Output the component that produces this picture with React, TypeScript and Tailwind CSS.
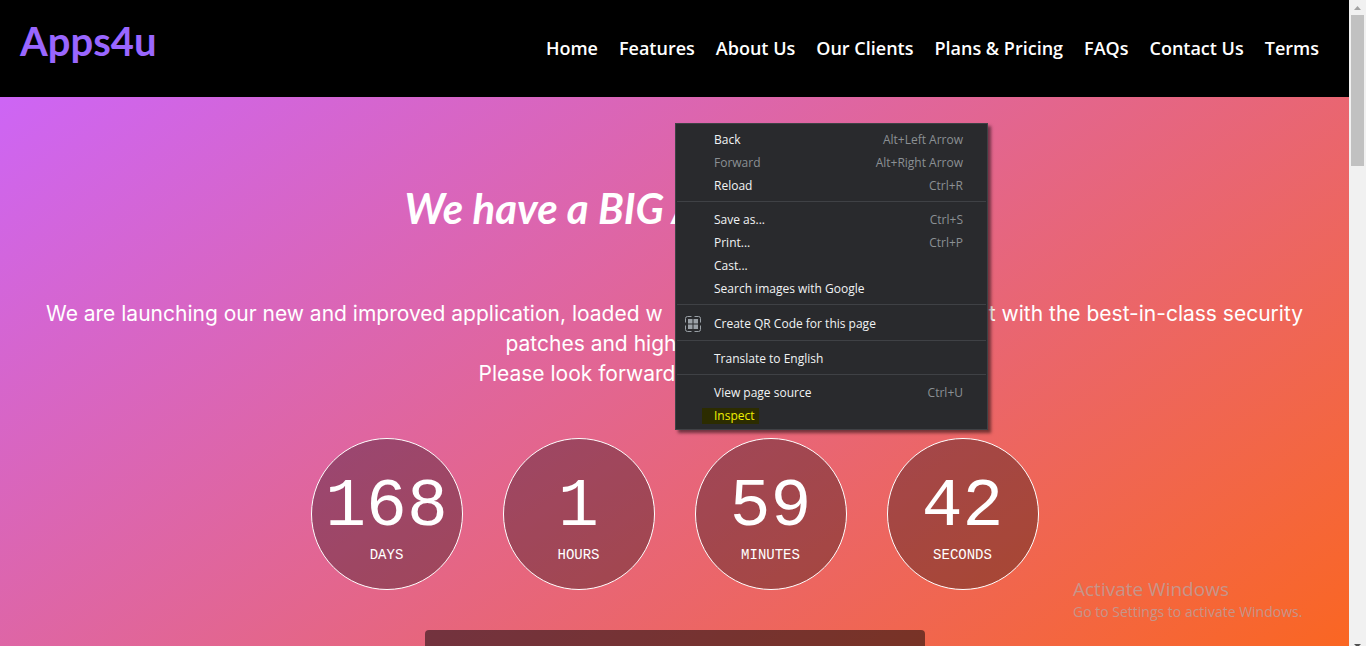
import React from "react";

const links = ["Home", "Features", "About Us", "Our Clients", "Plans & Pricing", "FAQs", "Contact Us", "Terms"];

const counters = [
  { value: "168", label: "DAYS" },
  { value: "1", label: "HOURS" },
  { value: "59", label: "MINUTES" },
  { value: "42", label: "SECONDS" },
];

type Item = { label: string; keys?: string; disabled?: boolean; icon?: boolean; marked?: boolean };

const groups: Item[][] = [
  [
    { label: "Back", keys: "Alt+Left Arrow" },
    { label: "Forward", keys: "Alt+Right Arrow", disabled: true },
    { label: "Reload", keys: "Ctrl+R" },
  ],
  [
    { label: "Save as...", keys: "Ctrl+S" },
    { label: "Print...", keys: "Ctrl+P" },
    { label: "Cast..." },
    { label: "Search images with Google" },
  ],
  [{ label: "Create QR Code for this page", icon: true }],
  [{ label: "Translate to English" }],
  [{ label: "View page source", keys: "Ctrl+U" }, { label: "Inspect", marked: true }],
];

function QrIcon() {
  return (
    <svg width="16" height="16" viewBox="0 0 16 16" fill="none" aria-hidden="true">
      <path
        d="M6.500 .5H2.500a2 2 0 0 0-2 2V6.500M9.500 .5h4a2 2 0 0 1 2 2V6.500M.5 9.500v4a2 2 0 0 0 2 2H6.500M15.500 9.500v4a2 2 0 0 1-2 2H9.500"
        stroke="#9aa0a6"
      />
      <path d="M3 3h4.500v4.500H3zM8.500 3H13v4.500H8.500zM3 8.500h4.500V13H3zM8.500 8.500H13V13H8.500z" fill="#9aa0a6" />
    </svg>
  );
}

function MenuItem({ item }: { item: Item }) {
  return (
    <button
      type="button"
      role="menuitem"
      disabled={item.disabled}
      className={`flex w-full items-center pr-6 text-left ${item.icon ? "h-[25px]" : "h-[23px]"} ${
        item.disabled ? "text-[#8b9094]" : item.marked ? "text-[#f0f000]" : "text-[#f1f3f4]"
      }`}
    >
      <span className="flex w-[34px] shrink-0 justify-center">{item.icon && <QrIcon />}</span>
      {item.marked ? (
        <span className="-ml-2 bg-[#2c2c00] pl-3 pr-1">{item.label}</span>
      ) : (
        <span className="pl-1">{item.label}</span>
      )}
      {item.keys && <span className="ml-auto text-[#8b9094]">{item.keys}</span>}
    </button>
  );
}

function ContextMenu() {
  return (
    <div
      role="menu"
      className="absolute left-[675px] top-[123px] w-[313px] border border-[#3f4145] bg-[#292a2d] pb-[2px] pt-1 font-['Open_Sans',sans-serif] text-[12px] leading-4 shadow-[3px_3px_3px_rgba(0,0,0,0.5)]"
    >
      {groups.map((group, i) => (
        <div key={i}>
          {i > 0 && (
            <div className="h-[11px] px-px pt-1">
              <div className="h-px bg-[#3f4145]" />
            </div>
          )}
          {group.map((item) => (
            <MenuItem key={item.label} item={item} />
          ))}
        </div>
      ))}
    </div>
  );
}

function Scrollbar() {
  return (
    <div className="flex w-[17px] shrink-0 flex-col items-center overflow-hidden bg-[#f1f1f1]" aria-hidden="true">
      <div className="flex h-[15px] shrink-0 items-center justify-center">
        <svg width="7" height="4" viewBox="0 0 7 4">
          <path d="M3.500 0L7 4H0z" fill="#a3a3a3" />
        </svg>
      </div>
      <div className="h-[151px] w-[13px] shrink-0 bg-[#c1c1c1]" />
      <svg className="mt-auto shrink-0" width="7" height="2" viewBox="0 0 7 2">
        <path d="M0 0h7L5 2H2z" fill="#505050" />
      </svg>
    </div>
  );
}

export default function App() {
  return (
    <div className="relative flex h-screen overflow-hidden">
      <div className="flex min-w-0 flex-1 flex-col">
        <header className="flex h-[97px] shrink-0 items-center justify-between bg-black pl-5 pr-[30px]">
          <a href="#" className="pb-4 font-['Lato',sans-serif] text-[40px] font-bold leading-[48px] text-[#9966ff]">
            Apps4u
          </a>
          <nav className="flex gap-[21px] whitespace-nowrap pb-0.5 font-['Open_Sans',sans-serif] text-[18px] font-semibold leading-6 text-white">
            {links.map((l) => (
              <a key={l} href="#">
                {l}
              </a>
            ))}
          </nav>
        </header>
        <main className="flex min-h-0 flex-1 flex-col items-center overflow-hidden bg-[linear-gradient(146deg,#cd65f5,#fa6622)] text-white">
          <h1 className="mt-[86px] w-[540px] whitespace-nowrap font-['Lato',sans-serif] text-[42px] font-bold italic leading-[50px]">
            We have a BIG A
          </h1>
          <div className="mt-[66px] w-full whitespace-nowrap px-[46px] font-['Inter',sans-serif] text-[21px] leading-[30px]">
            <p className="flex justify-between">
              <span>We are launching our new and improved application, loaded w</span>
              <span>t with the best-in-class security</span>
            </p>
            <p className="mx-auto w-[338px]">patches and high</p>
            <p className="mx-auto w-[392px]">Please look forward</p>
          </div>
          <div className="mt-[49px] flex gap-10 font-['Liberation_Mono',monospace]">
            {counters.map((c) => (
              <div
                key={c.label}
                className="flex size-[152px] flex-col items-center rounded-full border border-white bg-black/30 pt-8"
              >
                <span className="text-[68px] leading-[72px]">{c.value}</span>
                <span className="text-[14px] leading-6">{c.label}</span>
              </div>
            ))}
          </div>
          <div className="mt-10 h-20 w-[500px] shrink-0 rounded bg-black/50" />
        </main>
      </div>
      <Scrollbar />
      <div className="absolute bottom-6 left-[1073px] whitespace-nowrap font-['Open_Sans',sans-serif] text-[#c6958a]">
        <p className="text-[19px] leading-[25px]">Activate Windows</p>
        <p className="text-[14px] leading-5">Go to Settings to activate Windows.</p>
      </div>
      <ContextMenu />
    </div>
  );
}
